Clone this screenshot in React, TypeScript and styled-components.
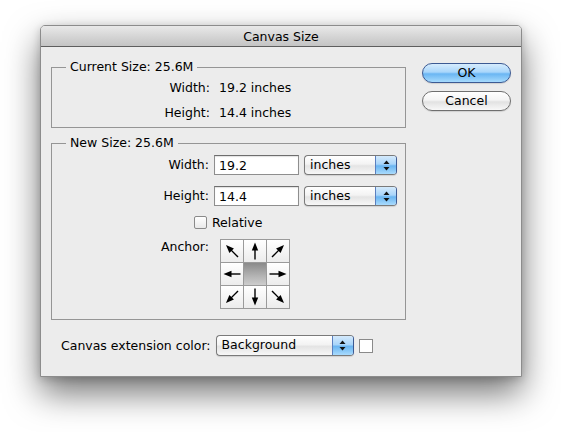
import styled, { createGlobalStyle } from 'styled-components';

const GlobalStyle = createGlobalStyle`
  html, body {
    margin: 0;
    background: #ffffff;
  }
  body {
    font-family: 'DejaVu Sans', 'Liberation Sans', sans-serif;
    font-size: 12.5px;
    color: #000;
  }
`;

// rotation (deg) for each anchor cell; null is the selected centre
const anchorCells: (number | null)[] = [-45, 0, 45, -90, null, 90, -135, 180, 135];

const Arrow = ({ angle }: { angle: number }) => (
  <svg width="22" height="22" viewBox="0 0 22 22">
    <g transform={`rotate(${angle} 11 11)`}>
      <line x1="11" y1="19.5" x2="11" y2="8" stroke="#000" strokeWidth="1.4" />
      <polygon points="11,2.5 7.8,10.5 14.2,10.5" fill="#000" />
    </g>
  </svg>
);

const Stepper = () => (
  <svg width="7" height="11" viewBox="0 0 7 11">
    <polygon points="3.5,0.5 0.5,4 6.5,4" fill="#111" />
    <polygon points="3.5,10.5 0.5,7 6.5,7" fill="#111" />
  </svg>
);

type PopUpProps = { label: string; width: number; height?: number };

const PopUp = ({ label, width, height = 20 }: PopUpProps) => (
  <PopUpBox $width={width} $height={height}>
    <PopUpText>{label}</PopUpText>
    <PopUpArrows>
      <Stepper />
    </PopUpArrows>
  </PopUpBox>
);

const App = () => {
  return (
    <Page>
      <GlobalStyle />
      <Window>
        <TitleBar>Canvas Size</TitleBar>
        <Body>
          <Main>
            <Group>
              <Legend>Current Size: 25.6M</Legend>
              <InfoGrid>
                <Label>Width:</Label>
                <span>19.2 inches</span>
                <Label>Height:</Label>
                <span>14.4 inches</span>
              </InfoGrid>
            </Group>

            <Group $spaced>
              <Legend>New Size: 25.6M</Legend>
              <FormGrid>
                <Label>Width:</Label>
                <TextField>19.2</TextField>
                <PopUp label="inches" width={93} />

                <Label>Height:</Label>
                <TextField>14.4</TextField>
                <PopUp label="inches" width={93} />

                <CheckRow>
                  <CheckBox />
                  <span>Relative</span>
                </CheckRow>

                <Label $top>Anchor:</Label>
                <AnchorGrid>
                  {anchorCells.map((angle, i) => (
                    <AnchorCell key={i} $active={angle === null}>
                      {angle !== null && <Arrow angle={angle} />}
                    </AnchorCell>
                  ))}
                </AnchorGrid>
              </FormGrid>
            </Group>

            <ExtensionRow>
              <span>Canvas extension color:</span>
              <PopUp label="Background" width={138} height={21} />
              <Swatch />
            </ExtensionRow>
          </Main>

          <Buttons>
            <PushButton $default>OK</PushButton>
            <PushButton>Cancel</PushButton>
          </Buttons>
        </Body>
      </Window>
    </Page>
  );
};

const Page = styled.div`
  padding: 25px 0 60px 40px;
`;

const Window = styled.div`
  box-sizing: border-box;
  width: 482px;
  background: #ececec;
  border: 1px solid #8c8c8c;
  border-radius: 5px 5px 0 0;
  box-shadow: 0 16px 34px rgba(0, 0, 0, 0.55), 0 2px 8px rgba(0, 0, 0, 0.18);
`;

const TitleBar = styled.div`
  height: 20px;
  line-height: 21px;
  text-align: center;
  font-size: 12.5px;
  background: linear-gradient(#e9e9e9, #d2d2d2 60%, #c4c4c4);
  border-bottom: 1px solid #5e5e5e;
  border-radius: 4px 4px 0 0;
`;

const Body = styled.div`
  display: flex;
  padding: 0 10px 20px 10px;
`;

const Main = styled.div`
  flex: 0 0 355px;
  padding-top: 12px;
`;

const Buttons = styled.div`
  flex: 0 0 89px;
  margin-left: 16px;
  padding-top: 16px;
  display: flex;
  flex-direction: column;
  gap: 8px;
`;

const PushButton = styled.div<{ $default?: boolean }>`
  box-sizing: border-box;
  height: 20px;
  border-radius: 10px;
  text-align: center;
  line-height: 18px;
  font-size: 12.5px;
  border: 1px solid ${({ $default }) => ($default ? '#3c5a93' : '#6f6f6f')};
  background: ${({ $default }) =>
    $default
      ? 'linear-gradient(#d6ecfd, #a9d6fb 45%, #6ab6f3 55%, #a6dafd)'
      : 'linear-gradient(#ffffff, #f4f4f4 45%, #e2e2e2 55%, #f8f8f8)'};
  box-shadow: 0 1px 1px rgba(0, 0, 0, 0.12);
`;

const Group = styled.fieldset<{ $spaced?: boolean }>`
  margin: ${({ $spaced }) => ($spaced ? '7px 0 0' : '0')};
  padding: ${({ $spaced }) => ($spaced ? '4px 0 10px' : '0 0 2px')};
  border: 1px solid #959595;
  min-width: 0;
`;

const Legend = styled.legend`
  margin-left: 14px;
  padding: 0 4px;
  line-height: 16px;
`;

const InfoGrid = styled.div`
  display: grid;
  grid-template-columns: 158px 1fr;
  grid-auto-rows: 25px;
  column-gap: 9px;
  align-items: center;
`;

const FormGrid = styled.div`
  display: grid;
  grid-template-columns: 157px 85px 93px;
  column-gap: 5px;
  row-gap: 11px;
  align-items: center;
`;

const Label = styled.span<{ $top?: boolean }>`
  text-align: right;
  align-self: ${({ $top }) => ($top ? 'start' : 'center')};
  line-height: 16px;
`;

const TextField = styled.div`
  box-sizing: border-box;
  height: 20px;
  padding: 0 4px;
  line-height: 19px;
  background: #fff;
  border: 1px solid #8e8e8e;
  border-top-color: #6e6e6e;
  box-shadow: inset 0 1px 1px rgba(0, 0, 0, 0.12);
`;

const PopUpBox = styled.div<{ $width: number; $height: number }>`
  box-sizing: border-box;
  display: flex;
  width: ${({ $width }) => $width}px;
  height: ${({ $height }) => $height}px;
  border: 1px solid #7a7a7a;
  border-right-color: #3c5a93;
  border-radius: 4px;
  background: linear-gradient(#ffffff, #f3f3f3 45%, #e4e4e4 55%, #f7f7f7);
  box-shadow: 0 1px 1px rgba(0, 0, 0, 0.12);
  overflow: hidden;
`;

const PopUpText = styled.span`
  flex: 1;
  padding-left: 5px;
  line-height: 18px;
`;

const PopUpArrows = styled.span`
  flex: 0 0 20px;
  display: flex;
  align-items: center;
  justify-content: center;
  border-left: 1px solid #5a7fbf;
  background: linear-gradient(#d4eafc, #a9d5fa 45%, #6ab5f1 55%, #a9dbfd);
`;

const CheckRow = styled.div`
  grid-column: 1 / -1;
  margin: -1px 0 -1px 142px;
  display: flex;
  align-items: center;
  gap: 5px;
  height: 13px;
`;

const CheckBox = styled.span`
  box-sizing: border-box;
  width: 13px;
  height: 13px;
  border: 1px solid #8a8a8a;
  border-radius: 2px;
  background: linear-gradient(#ffffff, #e9e9e9);
`;

const AnchorGrid = styled.div`
  grid-column: 2 / -1;
  margin-left: 6px;
  display: grid;
  grid-template-columns: repeat(3, 22px);
  grid-template-rows: repeat(3, 22px);
  gap: 1px;
  padding: 1px;
  width: max-content;
  background: #9a9a9a;
`;

const AnchorCell = styled.div<{ $active?: boolean }>`
  display: flex;
  align-items: center;
  justify-content: center;
  background: ${({ $active }) =>
    $active ? 'linear-gradient(#8a8a8a, #b4b4b4 60%, #cdcdcd)' : 'linear-gradient(#ffffff, #ececec)'};
`;

const ExtensionRow = styled.div`
  display: flex;
  align-items: center;
  gap: 5px;
  margin-top: 15px;
  padding-left: 10px;
`;

const Swatch = styled.span`
  box-sizing: border-box;
  width: 14px;
  height: 14px;
  background: #fff;
  border: 1px solid #8a8a8a;
`;

export default App;
